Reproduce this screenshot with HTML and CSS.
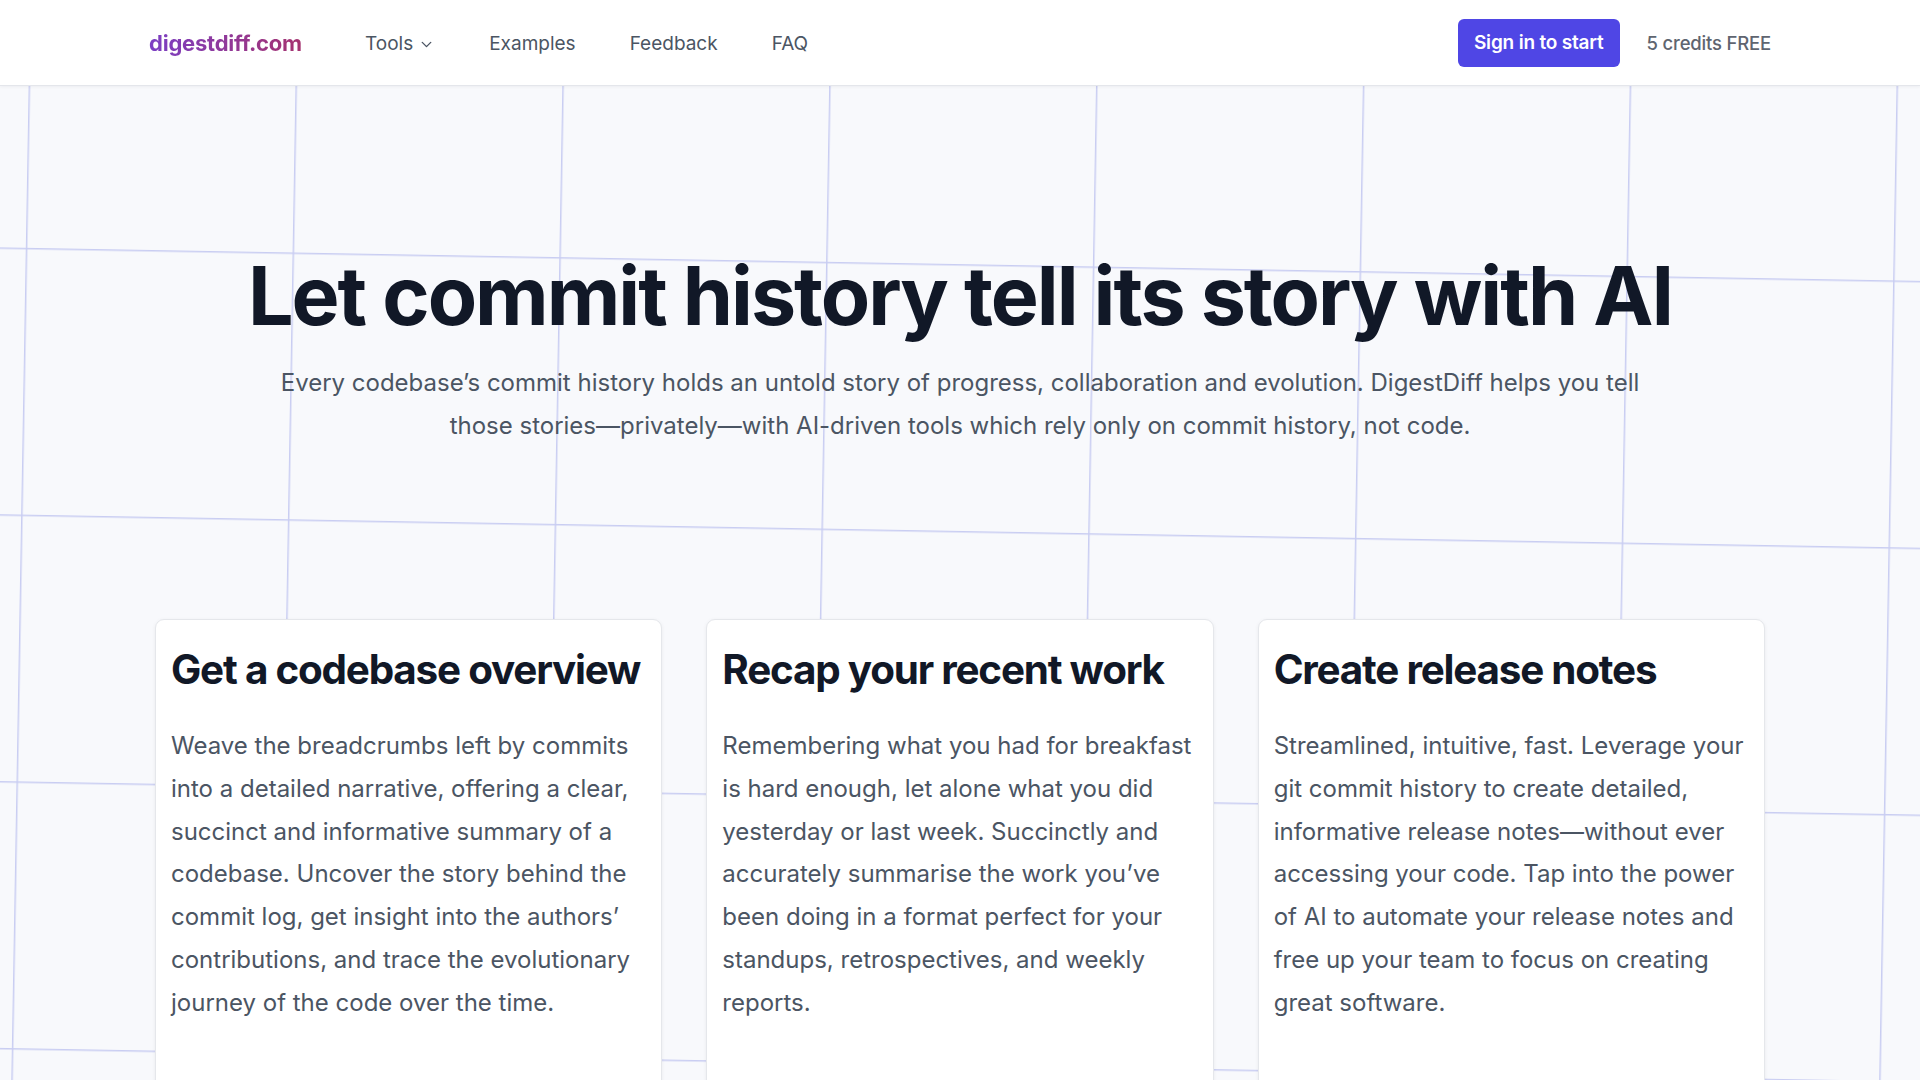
FILE: index.html
```html
<!DOCTYPE html>
<html lang="en">
<head>
<meta charset="utf-8">
<title>digestdiff.com — Let commit history tell its story with AI</title>
<link rel="stylesheet" href="styles.css">
</head>
<body>
<svg class="backdrop-grid" width="1920" height="1080" aria-hidden="true">
  <defs>
    <pattern id="grid-cell" width="266.8" height="266.8" patternUnits="userSpaceOnUse" patternTransform="translate(25.8 247.8) rotate(1)">
      <path d="M0.75 0 V266.8 M0 0.75 H266.8" fill="none" stroke="#c9cdf2" stroke-width="1.5"/>
    </pattern>
  </defs>
  <rect x="0" y="0" width="1920" height="1080" fill="url(#grid-cell)"/>
</svg>

<header class="site-header">
  <div class="header-inner">
    <a class="logo" href="#">digestdiff.com</a>
    <nav class="main-nav">
      <a class="nav-link nav-dropdown" href="#">Tools
        <svg class="chevron" width="17" height="17" viewBox="0 0 20 20" fill="none" stroke="currentColor" stroke-width="1.6" stroke-linecap="round" stroke-linejoin="round"><path d="M5 7.5l5 5 5-5"/></svg>
      </a>
      <a class="nav-link" href="#">Examples</a>
      <a class="nav-link" href="#">Feedback</a>
      <a class="nav-link" href="#">FAQ</a>
    </nav>
    <div class="header-actions">
      <a class="btn-primary" href="#">Sign in to start</a>
      <span class="credits">5 credits FREE</span>
    </div>
  </div>
</header>

<main class="page">
  <section class="hero">
    <h1 class="hero-title">Let commit history tell its story with AI</h1>
    <p class="hero-lead">Every codebase’s commit history holds an untold story of progress, collaboration and evolution. DigestDiff helps you tell those stories—privately—with AI-driven tools which rely only on commit history, not code.</p>
  </section>

  <section class="features">
    <article class="feature-card">
      <h2 class="feature-title">Get a codebase overview</h2>
      <p class="feature-text">Weave the breadcrumbs left by commits into a detailed narrative, offering a clear, succinct and informative summary of a codebase. Uncover the story behind the commit log, get insight into the authors’ contributions, and trace the evolutionary journey of the code over the time.</p>
    </article>
    <article class="feature-card">
      <h2 class="feature-title">Recap your recent work</h2>
      <p class="feature-text">Remembering what you had for breakfast is hard enough, let alone what you did yesterday or last week. Succinctly and accurately summarise the work you’ve been doing in a format perfect for your standups, retrospectives, and weekly reports.</p>
    </article>
    <article class="feature-card">
      <h2 class="feature-title">Create release notes</h2>
      <p class="feature-text">Streamlined, intuitive, fast. Leverage your git commit history to create detailed, informative release notes—without ever accessing your code. Tap into the power of AI to automate your release notes and free up your team to focus on creating great software.</p>
    </article>
  </section>
</main>
</body>
</html>
```

FILE: styles.css
```css
* {
  box-sizing: border-box;
}

html, body {
  margin: 0;
  padding: 0;
}

body {
  position: relative;
  min-height: 1080px;
  overflow: hidden;
  background: #f8f9fc;
  font-family: Inter, "Noto Sans", "Liberation Sans", sans-serif;
  color: #111827;
  -webkit-font-smoothing: antialiased;
}

a {
  text-decoration: none;
  color: inherit;
}

/* faint tilted grid behind the page */
.backdrop-grid {
  position: absolute;
  top: 0;
  left: 0;
  z-index: 0;
  pointer-events: none;
}

/* ---------- header ---------- */
.site-header {
  position: relative;
  z-index: 2;
  height: 86px;
  background: #ffffff;
  border-bottom: 1px solid #e4e6eb;
  box-shadow: 0 1px 3px rgba(15, 23, 42, 0.05);
}

.header-inner {
  height: 100%;
  width: 1622px;
  margin: 0 auto;
  display: flex;
  align-items: center;
}

.logo {
  font-size: 22px;
  font-weight: 700;
  letter-spacing: -0.01em;
  background: linear-gradient(90deg, #7b3fc4 0%, #a5336f 100%);
  -webkit-background-clip: text;
  background-clip: text;
  color: transparent;
}

.main-nav {
  display: flex;
  align-items: center;
  gap: 54px;
  margin-left: 63px;
  padding-top: 1px;
}

.nav-link {
  font-size: 19px;
  font-weight: 400;
  color: #4b5563;
}

.nav-dropdown {
  display: inline-flex;
  align-items: center;
  gap: 5px;
}

.chevron {
  margin-top: 2px;
}

.header-actions {
  margin-left: auto;
  display: flex;
  align-items: center;
  gap: 27px;
}

.btn-primary {
  display: inline-flex;
  align-items: center;
  height: 48px;
  padding: 0 16px;
  border-radius: 6px;
  background: #4f46e5;
  color: #ffffff;
  font-size: 19px;
  font-weight: 600;
  letter-spacing: -0.01em;
}

.credits {
  font-size: 18.5px;
  font-weight: 500;
  color: #5f6570;
  letter-spacing: -0.01em;
}

/* ---------- hero ---------- */
.page {
  position: relative;
  z-index: 1;
}

.hero {
  padding-top: 170px;
  text-align: center;
}

.hero-title {
  margin: 0;
  font-size: 80.7px;
  line-height: 80px;
  font-weight: 700;
  letter-spacing: -0.025em;
  color: #111827;
}

.hero-lead {
  width: 1400px;
  margin: 25px auto 0;
  font-size: 24px;
  line-height: 43px;
  font-weight: 400;
  color: #4b5563;
}

/* ---------- feature cards ---------- */
.features {
  width: 1610px;
  margin: 172px auto 0;
  display: grid;
  grid-template-columns: repeat(3, 1fr);
  gap: 44px;
}

.feature-card {
  min-height: 520px;
  padding: 24px 16px 24px 15px;
  background: #ffffff;
  border: 1px solid #e5e7eb;
  border-radius: 9px;
  box-shadow: 0 1px 4px rgba(15, 23, 42, 0.06);
}

.feature-title {
  margin: 0;
  font-size: 40.4px;
  line-height: 52px;
  font-weight: 700;
  letter-spacing: -0.03em;
  color: #111827;
  white-space: nowrap;
}

.feature-text {
  margin: 29px 0 0;
  font-size: 24px;
  line-height: 42.8px;
  font-weight: 400;
  color: #4b5563;
}
```
